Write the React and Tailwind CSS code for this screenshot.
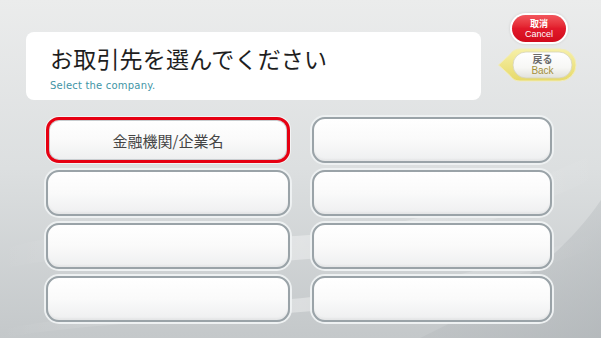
import React from "react";

const jp = { fontFamily: '"Noto Sans CJK JP", "Noto Sans", sans-serif' };

function Btn({ label, active }) {
  return (
    <div
      className={
        "h-[46px] rounded-[13px] flex items-center justify-center bg-gradient-to-b from-[#ffffff] via-[#fafafa] to-[#eeeff0] " +
        (active
          ? "border-[3px] border-[#e60012] shadow-[inset_0_0_0_1px_#c9cdd0,0_0_0_1px_#f3f4f5]"
          : "border-2 border-[#9aa3a8] shadow-[0_0_0_2px_#eef1f2,inset_0_-2px_2px_rgba(0,0,0,0.04)]")
      }
    >
      {label && (
        <span className="text-[15px] text-[#444] leading-none" style={jp}>
          {label}
        </span>
      )}
    </div>
  );
}

export default function App() {
  return (
    <div className="relative w-[601px] h-[338px] overflow-hidden bg-gradient-to-b from-[#ebecec] via-[#dcdfe0] to-[#c4c8ca]">
      <svg className="absolute inset-0" width="601" height="338" viewBox="0 0 601 338">
        <defs>
          <linearGradient id="sw" x1="0" y1="0" x2="1" y2="0">
            <stop offset="0" stopColor="#ffffff" stopOpacity="0" />
            <stop offset="0.5" stopColor="#ffffff" stopOpacity="0.35" />
            <stop offset="1" stopColor="#ffffff" stopOpacity="0" />
          </linearGradient>
          <linearGradient id="dk" x1="0" y1="0" x2="1" y2="1">
            <stop offset="0" stopColor="#b9bdc0" stopOpacity="0" />
            <stop offset="1" stopColor="#aeb3b6" stopOpacity="0.7" />
          </linearGradient>
        </defs>
        <path d="M0 250 C 150 200, 300 300, 601 150 L 601 175 C 300 320, 150 230, 0 270 Z" fill="url(#sw)" />
        <path d="M0 330 C 200 290, 380 320, 601 230 L 601 245 C 380 335, 200 305, 0 338 Z" fill="url(#sw)" />
        <path d="M420 338 C 500 300, 560 260, 601 200 L 601 338 Z" fill="url(#dk)" />
      </svg>

      <div className="relative flex flex-col">
        <div className="flex items-start pl-[26px] pt-[15px]">
          <div className="mt-[17px] w-[455px] h-[68px] bg-white rounded-[8px] pl-[24px] pt-[11px]">
            <div className="text-[23px] leading-[30px] text-[#1e1e1e] tracking-[0.2px]" style={jp}>
              お取引先を選んでください
            </div>
            <div
              className="mt-[7px] text-[10px] leading-[12px] text-[#3f95a6] tracking-[0.2px]"
              style={{ fontFamily: '"DejaVu Sans", sans-serif' }}
            >
              Select the company.
            </div>
          </div>

          <div className="ml-[17px] w-[79px] flex flex-col">
            <div className="ml-[14px] w-[54px] h-[27px] rounded-full bg-gradient-to-b from-[#f2545c] via-[#e2192a] to-[#d10a1c] shadow-[0_0_0_2px_#ffffff,0_0_3px_2px_rgba(0,0,0,0.12)] flex flex-col items-center justify-center text-white">
              <span className="block h-[11px] text-[9px] leading-[11px] font-bold" style={jp}>取消</span>
              <span className="block h-[11px] text-[9px] leading-[11px]" style={{ fontFamily: '"Liberation Sans", sans-serif' }}>Cancel</span>
            </div>

            <div className="relative mt-[6px] w-[79px] h-[34px]">
              <svg className="absolute inset-0" width="79" height="34" viewBox="0 0 79 34">
                <defs>
                  <linearGradient id="yl" x1="0" y1="0" x2="0" y2="1">
                    <stop offset="0" stopColor="#f6f0a8" />
                    <stop offset="1" stopColor="#e6d96a" />
                  </linearGradient>
                  <linearGradient id="wh" x1="0" y1="0" x2="0" y2="1">
                    <stop offset="0" stopColor="#ffffff" />
                    <stop offset="0.6" stopColor="#f7f7f5" />
                    <stop offset="1" stopColor="#e2e2dc" />
                  </linearGradient>
                </defs>
                <path d="M0.5 17 L12 6.5 Q15.5 1 22 1 H62 A16 16 0 0 1 62 33 H22 Q15.5 33 12 27.5 Z" fill="url(#yl)" stroke="#f2ecb8" strokeWidth="1" />
                <rect x="15" y="4" width="59" height="26" rx="13" fill="url(#wh)" stroke="#d6d3b8" strokeWidth="0.8" />
              </svg>
              <div className="absolute left-[15px] top-[4px] w-[59px] h-[26px] flex flex-col items-center justify-center">
                <span className="block h-[12px] text-[10px] leading-[12px] font-bold text-[#6a6a6a]" style={jp}>戻る</span>
                <span className="block h-[12px] text-[10px] leading-[12px] text-[#a38f3c]" style={{ fontFamily: '"Liberation Sans", sans-serif' }}>Back</span>
              </div>
            </div>
          </div>
        </div>

        <div className="mt-[17px] ml-[46px] grid grid-cols-[244px_240px] gap-x-[22px] gap-y-[7px]">
          <Btn label="金融機関/企業名" active />
          <Btn />
          <Btn />
          <Btn />
          <Btn />
          <Btn />
          <Btn />
          <Btn />
        </div>
      </div>
    </div>
  );
}
